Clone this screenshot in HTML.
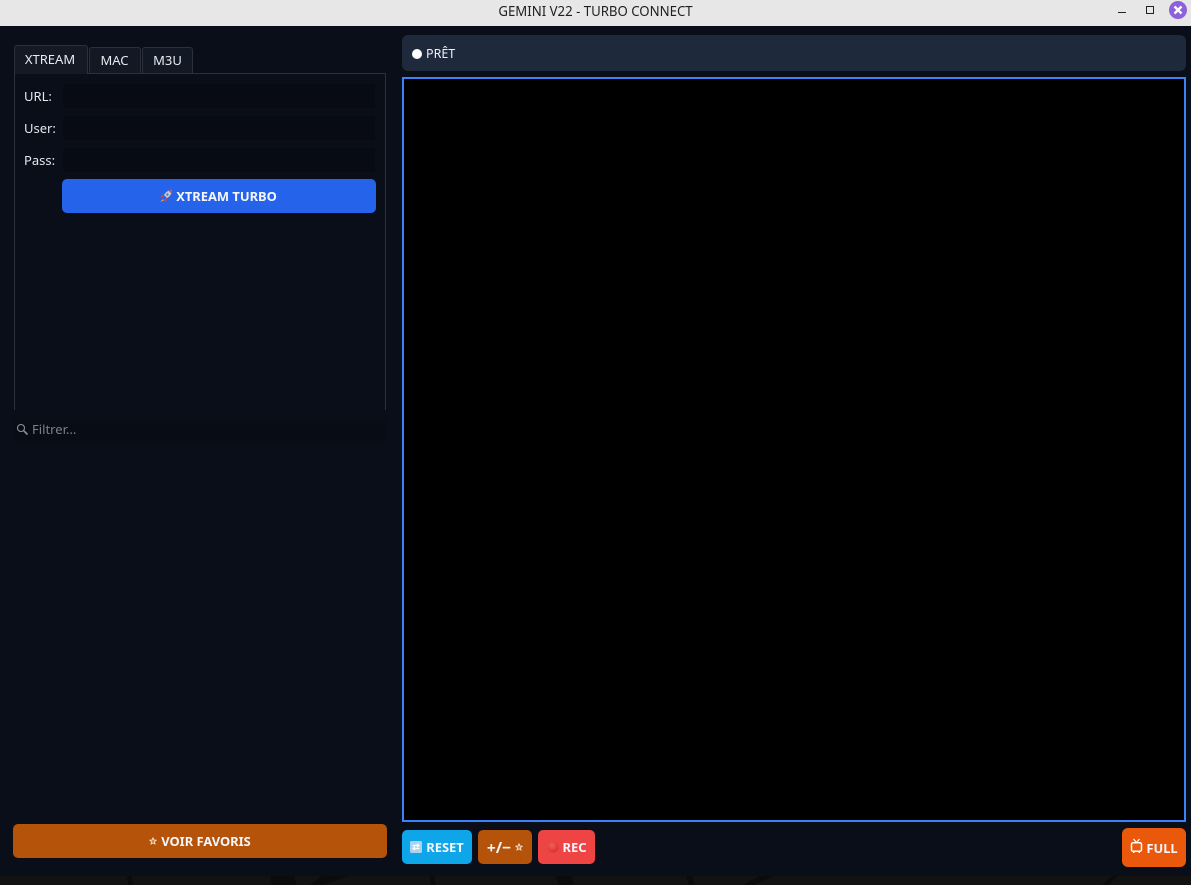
<!DOCTYPE html>
<html><head><meta charset="utf-8"><style>
html,body{margin:0;padding:0;background:#0f0f0f;}
#r{position:relative;width:1191px;height:885px;overflow:hidden;background:#121211;font-family:"Noto Sans","Noto Sans CJK JP","Liberation Sans",sans-serif;}
#r div,#r span.a{position:absolute;box-sizing:border-box;}
.t{white-space:nowrap;line-height:18px;}
.btn{border-radius:5px;color:#f4f6fb;font-weight:700;font-size:12.9px;white-space:nowrap;display:flex;align-items:center;justify-content:center;}
.inp{background:#080b13;border:1px solid #0b0e16;border-radius:3px;}
.tab{background:#141a24;border:1px solid #2b303b;border-bottom:none;border-radius:3px 3px 0 0;color:#e8ecf2;font-size:13px;text-align:center;}
svg{flex:none}
</style></head><body><div id="r">
<svg style="position:absolute;left:0;top:876px" width="1191" height="9"><g fill="#0b0b0b"><path d="M127 0h5l1 9h-5z"/><path d="M270 0h24l3 9h-25z"/><path d="M430 0h4l2 9h-5z"/><path d="M555 0h16l3 9h-15z"/><path d="M686 0h6l3 9h-6z"/><path d="M322 0h26l-24 9h-14z"/><path d="M760 0h14l-20 9h-12z"/><path d="M1112 0h6l-10 9h-6z"/></g></svg>
<div style="left:0;top:0;width:1191px;height:26px;background:#e7e7e7"></div>
<div class="t" style="left:0;top:2px;width:1191px;text-align:center;font-size:13.2px;color:#1f1f1f">GEMINI V22 - TURBO CONNECT</div>
<div style="left:1118px;top:12px;width:8px;height:1px;background:#222"></div>
<div style="left:1146px;top:6px;width:8px;height:8px;border:1px solid #222"></div>
<div style="left:1169px;top:1px;width:18px;height:18px;border-radius:50%;background:#8d62d8"></div>
<svg style="position:absolute;left:1169px;top:1px" width="18" height="18"><path d="M5.500 5.500l7 7M12.500 5.500l-7 7" stroke="#fff" stroke-width="2.400"/></svg>
<div style="left:0;top:26px;width:1191px;height:850px;background:#0a0e18"></div>

<div style="left:14px;top:73px;width:372px;height:337px;border:1px solid #2b303b;border-bottom:none"></div>
<div class="tab" style="left:14px;top:45px;width:74px;height:29px;line-height:27px;padding-right:2px">XTREAM</div>
<div class="tab" style="left:89px;top:47px;width:52px;height:26px;line-height:25px;background:#131924;padding-right:1px">MAC</div>
<div class="tab" style="left:142px;top:47px;width:51px;height:26px;line-height:25px;background:#131924">M3U</div>

<div class="t" style="left:24px;top:87px;font-size:13px;color:#e6e8ee">URL:</div>
<div class="t" style="left:24px;top:119px;font-size:13px;color:#e6e8ee">User:</div>
<div class="t" style="left:24px;top:151px;font-size:13px;color:#e6e8ee">Pass:</div>
<div class="inp" style="left:62px;top:83px;width:314px;height:26px"></div>
<div class="inp" style="left:62px;top:115px;width:314px;height:26px"></div>
<div class="inp" style="left:62px;top:147px;width:314px;height:26px"></div>
<div class="btn" style="left:62px;top:179px;width:314px;height:34px;background:#2563eb">
<svg width="14" height="14" viewBox="0 0 13 13" style="margin-right:3px;margin-left:-2px"><path d="M12 1C9 1 6.500 2.500 4.500 5.500L7.500 8.500C10.500 6.500 12 4 12 1z" fill="#c4c9d4"/><path d="M12 1c-1.500 0-2.500.4-3 .7l2.300 2.300C11.700 3.500 12 2.500 12 1z" fill="#e0433e"/><circle cx="7.800" cy="5.200" r="1" fill="#3a6fb0"/><path d="M4.500 5.500L2 6l-1 2 3-.5zM7.500 8.500L7 11l-2 1 .5-3z" fill="#d9453f"/><path d="M3.500 9.500L1 12l3-1 .5-1z" fill="#f0a030"/></svg><span>XTREAM TURBO</span></div>

<div class="inp" style="left:13px;top:419px;width:374px;height:25px;background:#090c15"></div>
<svg style="position:absolute;left:16px;top:423px" width="13" height="13" viewBox="0 0 13 13"><circle cx="5" cy="5" r="3.500" fill="none" stroke="#8c9097" stroke-width="1.100"/><path d="M7.800 7.800L11.500 11.500" stroke="#8c9097" stroke-width="1.600"/></svg>
<div class="t" style="left:32px;top:420px;font-size:13px;color:#7c8086">Filtrer...</div>
<div style="left:13px;top:450px;width:374px;height:368px;background:#0a0e18;border:1px solid #0c1019"></div>
<div class="btn" style="left:13px;top:824px;width:374px;height:34px;background:#b45309">
<svg width="8" height="8" viewBox="0 0 10 10" style="margin-right:4px"><path d="M5 1l1.200 2.700 2.800.3-2.100 1.900.6 2.900L5 7.300 2.500 8.800l.6-2.900L1 4l2.800-.3z" fill="#c9803c" stroke="#f6ead8" stroke-width="1"/></svg><span>VOIR FAVORIS</span></div>

<div style="left:402px;top:35px;width:784px;height:36px;background:#1e293b;border-radius:6px"></div>
<div style="left:412px;top:49px;width:10px;height:10px;border-radius:50%;background:#fff"></div>
<div class="t" style="left:426px;top:45px;font-size:12.500px;color:#eef1f6">PRÊT</div>
<div style="left:402px;top:77px;width:784px;height:745px;background:#000;border:2px solid #3b82f6"></div>

<div class="btn" style="left:402px;top:830px;width:70px;height:34px;background:#0ea5e9">
<svg width="12" height="12" viewBox="0 0 12 12" style="margin-right:4px"><rect width="12" height="12" rx="1.500" fill="#a9d3ee"/><path d="M2.500 4.500h6M7 2.800l2 1.700-2 1.700M9.500 7.500h-6M5 5.800L3 7.500l2 1.700" fill="none" stroke="#fff" stroke-width="1.200"/></svg><span>RESET</span></div>
<div class="btn" style="left:478px;top:830px;width:54px;height:34px;background:#b45309"><span style="font-size:15.500px">+/−</span>
<svg width="8" height="8" viewBox="0 0 10 10" style="margin-left:4px"><path d="M5 1l1.200 2.700 2.800.3-2.100 1.900.6 2.900L5 7.300 2.500 8.800l.6-2.900L1 4l2.800-.3z" fill="#c9803c" stroke="#f6ead8" stroke-width="1"/></svg></div>
<div class="btn" style="left:538px;top:830px;width:57px;height:34px;background:#ef4444">
<svg width="12" height="12" style="margin-right:4px"><defs><radialGradient id="g" cx=".4" cy=".35" r=".7"><stop offset="0" stop-color="#f0605c"/><stop offset="1" stop-color="#d92e2c"/></radialGradient></defs><circle cx="6" cy="6" r="5.500" fill="url(#g)"/></svg><span>REC</span></div>
<div class="btn" style="left:1122px;top:828px;width:64px;height:39px;background:#ea580c;border-radius:6px">
<svg width="13" height="16" viewBox="0 0 13 16" style="margin-right:3px;margin-top:-3px"><path d="M3.500 1l3 3.500L9.500 1" fill="none" stroke="#fff" stroke-width="1.200"/><rect x="1.500" y="4.800" width="10" height="8.400" rx="1.500" fill="none" stroke="#fff" stroke-width="1.500"/><path d="M3 14.500h1.500M8.500 14.500H10" stroke="#fff"/></svg><span>FULL</span></div>
</div></body></html>
